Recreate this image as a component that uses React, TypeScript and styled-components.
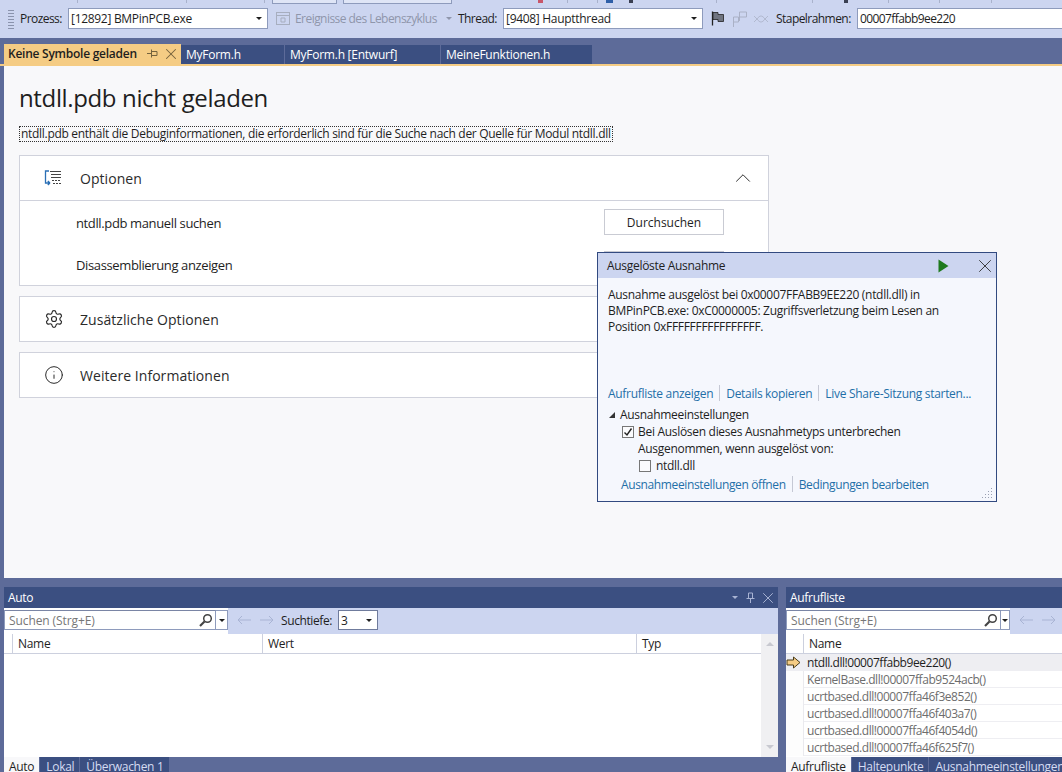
import React from 'react';
import styled, { createGlobalStyle } from 'styled-components';
import { ChevronUp, Settings, Info, X } from 'lucide-react';

const GlobalStyle = createGlobalStyle`
  html, body {
    margin: 0;
    padding: 0;
    background: #5d6b99;
  }
  * {
    box-sizing: border-box;
  }
`;

const Page = styled.div`
  position: relative;
  width: 1062px;
  height: 772px;
  overflow: hidden;
  display: flex;
  flex-direction: column;
  background: #5d6b99;
  color: #1e1e1e;
  font-family: 'Open Sans', 'Noto Sans', 'Liberation Sans', sans-serif;
  font-size: 12px;
  letter-spacing: -0.3px;
`;

const TopStrip = styled.div`
  height: 4px;
  flex: none;
  display: flex;
  background: #ccd5f0;
`;

const StripMark = styled.span<{ $ml: number; $w: number; $kind: string }>`
  flex: none;
  width: ${(p) => p.$w}px;
  margin-left: ${(p) => p.$ml}px;
  height: ${(p) => (p.$kind === 'box' ? 4 : 3)}px;
  background: ${(p) =>
    p.$kind === 'box'
      ? '#dfe5f6'
      : p.$kind === 'red'
        ? '#c8566a'
        : p.$kind === 'blue'
          ? '#2f5fa8'
          : p.$kind === 'dark'
            ? '#3a3f52'
            : '#a9b2cc'};
  ${(p) => p.$kind === 'box' && 'border: 1px solid #8e9bbc; border-top: none;'}
`;

const Toolbar = styled.div`
  height: 34px;
  flex: none;
  display: flex;
  align-items: center;
  background: #ccd5f0;
  padding: 0 0 5px 8px;
  white-space: nowrap;
`;

const Grip = styled.div`
  width: 6px;
  height: 20px;
  flex: none;
  margin-right: 6px;
  background-image: radial-gradient(#8a93ad 0.7px, transparent 0.8px);
  background-size: 2px 3px;
`;

const Label = styled.span<{ $muted?: boolean; $w: number; $ml?: number }>`
  flex: none;
  width: ${(p) => p.$w}px;
  margin-left: ${(p) => p.$ml ?? 0}px;
  letter-spacing: -0.55px;
  color: ${(p) => (p.$muted ? '#8f96ab' : '#1e1e1e')};
`;

const Combo = styled.div<{ $w: number; $ml?: number }>`
  width: ${(p) => p.$w}px;
  height: 21px;
  flex: none;
  margin-left: ${(p) => p.$ml ?? 0}px;
  display: flex;
  align-items: center;
  justify-content: space-between;
  background: #fff;
  border: 1px solid #8e9bbc;
  padding: 0 5px 0 2px;
`;

const FrameCombo = styled(Combo)`
  letter-spacing: -0.6px;
`;

const Caret = styled.span`
  width: 0;
  height: 0;
  flex: none;
  border-left: 3px solid transparent;
  border-right: 3px solid transparent;
  border-top: 3px solid #1e1e1e;
`;

const MutedCaret = styled(Caret)`
  border-top-color: #8f96ab;
  margin-right: 6px;
`;

const LightCaret = styled(Caret)`
  border-top-color: #a8b3d3;
  margin-right: 4px;
`;

const ToolIcon = styled.svg<{ $ml?: number }>`
  flex: none;
  margin-left: ${(p) => p.$ml ?? 0}px;
`;

const TabStrip = styled.div`
  height: 28px;
  flex: none;
  display: flex;
  align-items: flex-end;
  padding-left: 4px;
  border-bottom: 2px solid #f5cc84;
`;

const DocTab = styled.div<{ $w: number; $active?: boolean }>`
  width: ${(p) => p.$w}px;
  height: ${(p) => (p.$active ? 20 : 19)}px;
  flex: none;
  display: flex;
  align-items: center;
  justify-content: space-between;
  padding: 0 1px 1px ${(p) => (p.$active ? 4 : 5)}px;
  margin-right: ${(p) => (p.$active ? 0 : 1)}px;
  font-weight: ${(p) => (p.$active ? 600 : 400)};
  letter-spacing: -0.25px;
  color: ${(p) => (p.$active ? '#1e1e1e' : '#fff')};
  background: ${(p) => (p.$active ? '#f5cc84' : '#3b4f81')};
`;

const TabControls = styled.span`
  display: flex;
  align-items: center;
  gap: 5px;
  color: #75633d;
`;

const PinGlyph = styled.svg<{ $turn?: boolean }>`
  flex: none;
  transform: rotate(${(p) => (p.$turn ? 90 : 0)}deg);
`;

const Document = styled.main`
  height: 512px;
  flex: none;
  margin-left: 4px;
  padding: 17px 15px 0;
  background: #f8f8fa;
`;

const Title = styled.h1`
  margin: 0 0 14px;
  font-size: 24px;
  line-height: 29px;
  font-weight: 400;
  letter-spacing: -0.36px;
  color: #1e1e1e;
`;

const Description = styled.div`
  width: fit-content;
  height: 16px;
  line-height: 14px;
  padding: 0 1px;
  margin-bottom: 13px;
  border: 1px dotted #333;
  white-space: nowrap;
`;

const Card = styled.section`
  width: 750px;
  background: #fff;
  border: 1px solid #d0d2dc;
  margin-bottom: 10px;
`;

const CardHeader = styled.div<{ $open?: boolean }>`
  height: ${(p) => (p.$open ? 45 : 44)}px;
  display: flex;
  align-items: center;
  padding-left: 24px;
  font-size: 14px;
  letter-spacing: 0.05px;
  color: #2b2b2b;
  border-bottom: ${(p) => (p.$open ? '1px solid #d0d2dc' : 'none')};
`;

const HeaderIcon = styled.span`
  width: 36px;
  flex: none;
  display: flex;
  align-items: center;
`;

const Collapse = styled.span`
  margin-left: auto;
  margin-right: 12px;
  display: flex;
`;

const OptionRow = styled.div`
  height: 42px;
  display: flex;
  align-items: center;
  justify-content: space-between;
  padding: 0 44px 0 56px;
  font-size: 13px;
  letter-spacing: -0.37px;
`;

const OptionLabel = styled.span`
  margin-top: 2px;
`;

const WideButton = styled.button`
  width: 120px;
  height: 26px;
  padding: 0;
  font-family: inherit;
  font-size: 12px;
  letter-spacing: 0;
  color: inherit;
  background: #fff;
  border: 1px solid #c9cbd3;
`;

const Popup = styled.aside`
  position: absolute;
  left: 597px;
  top: 252px;
  width: 400px;
  height: 250px;
  display: flex;
  flex-direction: column;
  background: #f5f7fd;
  border: 1px solid #324a80;
`;

const PopupTitle = styled.div`
  height: 25px;
  flex: none;
  display: flex;
  align-items: center;
  justify-content: space-between;
  padding: 0 0 0 9px;
  background: #ccd5f0;
`;

const PopupControls = styled.span`
  display: flex;
  align-items: center;
  gap: 25px;
`;

const PopupMessage = styled.p`
  margin: 0;
  height: 106px;
  flex: none;
  padding: 9px 10px 0;
  line-height: 16px;
`;

const LinkRow = styled.div<{ $indent: number }>`
  display: flex;
  align-items: center;
  height: 18px;
  flex: none;
  padding-left: ${(p) => p.$indent}px;
  white-space: nowrap;
`;

const SettingsLinkRow = styled(LinkRow)`
  margin-top: 1px;
  letter-spacing: -0.37px;
`;

const LinkText = styled.span`
  color: #1f6fa8;
`;

const LinkDivider = styled.span`
  width: 1px;
  height: 16px;
  margin: 0 6px;
  background: #c5c8d4;
`;

const ExceptionSettings = styled.div`
  margin-top: 4px;
  display: flex;
  flex-direction: column;
  flex: 1;
  position: relative;
`;

const SettingsLine = styled.div<{ $indent: number; $gap?: number }>`
  height: 17px;
  display: flex;
  align-items: center;
  gap: ${(p) => p.$gap ?? 5}px;
  padding-left: ${(p) => p.$indent}px;
  white-space: nowrap;
`;

const Disclosure = styled.span`
  width: 0;
  height: 0;
  border-left: 6px solid transparent;
  border-bottom: 6px solid #333;
`;

const CheckBox = styled.span`
  width: 12px;
  height: 12px;
  flex: none;
  display: flex;
  align-items: center;
  justify-content: center;
  background: #fbfbfd;
  border: 1px solid #777;
`;

const Resize = styled.svg`
  position: absolute;
  right: 2px;
  bottom: 2px;
`;

const Splitter = styled.div`
  height: 9px;
  flex: none;
`;

const Docks = styled.div`
  flex: 1;
  display: flex;
  padding-left: 4px;
  min-height: 0;
`;

const Dock = styled.section<{ $w: number; $ml?: number }>`
  width: ${(p) => p.$w}px;
  margin-left: ${(p) => p.$ml ?? 0}px;
  flex: none;
  display: flex;
  flex-direction: column;
  overflow: hidden;
`;

const DockTitle = styled.div`
  height: 21px;
  flex: none;
  display: flex;
  align-items: center;
  justify-content: space-between;
  padding: 0 1px 0 4px;
  background: #3b4f81;
  color: #fff;
`;

const DockControls = styled.span`
  display: flex;
  align-items: center;
  gap: 4px;
  color: #a8b3d3;
`;

const DockTools = styled.div`
  height: 26px;
  flex: none;
  display: flex;
  align-items: flex-start;
  background: #ccd5f0;
  white-space: nowrap;
`;

const SearchArea = styled.div`
  height: 26px;
  flex: none;
  display: flex;
  padding-top: 2px;
  background: #fff;
`;

const SearchBox = styled.div<{ $w: number }>`
  width: ${(p) => p.$w}px;
  height: 20px;
  flex: none;
  display: flex;
  align-items: center;
  justify-content: space-between;
  background: #fff;
  border: 1px solid #8e9bbc;
  border-top-color: #7a85a5;
  padding: 0 2px 0 4px;
  letter-spacing: -0.1px;
  color: #777;
`;

const SearchMenu = styled.span<{ $w: number }>`
  width: ${(p) => p.$w}px;
  height: 20px;
  flex: none;
  display: flex;
  align-items: center;
  justify-content: center;
  background: #fff;
  border: 1px solid #8e9bbc;
  border-left: none;
`;

const NavArrows = styled.span`
  display: flex;
  align-items: center;
  gap: 9px;
  height: 24px;
  margin: 0 7px 0 9px;
  color: #a9b4d4;
`;

const DepthLabel = styled.span`
  line-height: 25px;
  letter-spacing: -0.4px;
`;

const DepthCombo = styled(Combo)`
  height: 20px;
  margin-top: 2px;
  border-color: #6f7b9c;
`;

const Grid = styled.div`
  flex: 1;
  display: flex;
  min-height: 0;
  background: #fff;
`;

const GridMain = styled.div`
  flex: 1;
  min-width: 0;
`;

const Scrollbar = styled.div`
  width: 17px;
  flex: none;
  display: flex;
  flex-direction: column;
  justify-content: space-between;
  align-items: center;
  padding: 8px 0;
  background: #f0f0f2;
`;

const ScrollArrow = styled.span<{ $up?: boolean }>`
  width: 0;
  height: 0;
  border-left: 4px solid transparent;
  border-right: 4px solid transparent;
  ${(p) => (p.$up ? 'border-bottom' : 'border-top')}: 4px solid #c8c9d0;
`;

const HeaderRow = styled.div`
  height: 20px;
  display: flex;
  background: #fff;
  border-bottom: 1px solid #ccd0de;
`;

const HeaderCell = styled.div<{ $w?: number }>`
  width: ${(p) => (p.$w ? `${p.$w}px` : 'auto')};
  flex: ${(p) => (p.$w ? 'none' : '1')};
  line-height: 20px;
  padding-left: 5px;
  border-left: 1px solid #ccd0de;
  &:first-child {
    border-left: none;
    padding-left: 0;
  }
`;

const StackRow = styled.div<{ $current?: boolean }>`
  height: 17px;
  display: flex;
  align-items: center;
  white-space: nowrap;
  letter-spacing: -0.45px;
  color: ${(p) => (p.$current ? '#1e1e1e' : '#6d6d6d')};
  background: ${(p) => (p.$current ? '#eeeef2' : '#fff')};
  box-shadow: inset 0 -1px 0 #eeeef2;
`;

const StackGutter = styled.span`
  width: 18px;
  height: 100%;
  flex: none;
  display: flex;
  align-items: center;
  background: #fdfdfd;
  border-right: 1px solid #eaeaee;
  margin-right: 3px;
`;

const CurrentGutter = styled(StackGutter)`
  background: #eeeef2;
  border-right-color: #eeeef2;
`;

const BottomTabs = styled.div`
  height: 15px;
  flex: none;
  display: flex;
  overflow: hidden;
`;

const BottomTab = styled.div<{ $active?: boolean }>`
  height: 20px;
  flex: none;
  padding: 0 5px 0 ${(p) => (p.$active ? 5 : 6)}px;
  margin-right: 1px;
  line-height: 19px;
  color: ${(p) => (p.$active ? '#1e1e1e' : '#d5dcf2')};
  background: ${(p) => (p.$active ? '#f8f8fa' : '#3b4f81')};
`;

const OptionsIcon = () => (
  <svg width="18" height="17" viewBox="0 0 18 17" fill="none">
    <path d="M5 1H1.5v12H6M6 13l-2.2-2M6 13l-2.2 2" stroke="#2a6fb5" strokeWidth="1.3" />
    <path d="M6 1.5h11M7 4.5h10M7 7.5h10" stroke="#444" strokeWidth="1" />
    <path d="M8 10.5h9M9 13.5h8" stroke="#444" strokeWidth="1" strokeDasharray="2 1" />
  </svg>
);

const PinIcon = ({ turn }: { turn?: boolean }) => (
  <PinGlyph $turn={turn} width="9" height="11" viewBox="0 0 9 11" fill="none">
    <path d="M2.5 1h4v5.5h-4zM0.5 6.5h8M4.5 6.5V11" stroke="currentColor" strokeWidth="1" />
  </PinGlyph>
);

const NavArrow = ({ right }: { right?: boolean }) => (
  <svg width="14" height="10" viewBox="0 0 14 10" fill="none">
    <path
      d={right ? 'M0 5h13M9 1l4 4-4 4' : 'M14 5H1M5 1L1 5l4 4'}
      stroke="currentColor"
      strokeWidth="1"
    />
  </svg>
);

const SearchGlass = () => (
  <svg width="15" height="15" viewBox="0 0 15 15" fill="none">
    <circle cx="9.5" cy="5.5" r="3.8" stroke="#444" strokeWidth="1.5" />
    <path d="M6.5 8.5L2 13" stroke="#444" strokeWidth="2.2" />
  </svg>
);

// x, width, kind of what is still visible of the toolbar row above
const stripMarks: [number, number, string][] = [
  [77, 1, 'sep'],
  [186, 1, 'sep'],
  [264, 1, 'sep'],
  [272, 65, 'box'],
  [343, 109, 'box'],
  [538, 5, 'red'],
  [567, 1, 'sep'],
  [597, 1, 'sep'],
  [606, 7, 'blue'],
  [629, 4, 'dark'],
  [716, 1, 'sep'],
  [812, 1, 'sep'],
  [844, 4, 'dark'],
  [888, 1, 'sep'],
  [939, 1, 'sep'],
  [991, 1, 'sep'],
];

const stackFrames = [
  'KernelBase.dll!00007ffab9524acb()',
  'ucrtbased.dll!00007ffa46f3e852()',
  'ucrtbased.dll!00007ffa46f403a7()',
  'ucrtbased.dll!00007ffa46f4054d()',
  'ucrtbased.dll!00007ffa46f625f7()',
];

const App: React.FC = () => {
  return (
    <Page>
      <GlobalStyle />
      <TopStrip>
        {stripMarks.map(([x, w, kind], i) => {
          const prev = i > 0 ? stripMarks[i - 1][0] + stripMarks[i - 1][1] : 0;
          return <StripMark key={x} $ml={x - prev} $w={w} $kind={kind} />;
        })}
      </TopStrip>
      <Toolbar>
        <Grip />
        <Label $w={48}>Prozess:</Label>
        <Combo $w={200}>
          [12892] BMPinPCB.exe
          <Caret />
        </Combo>
        <ToolIcon $ml={8} width="14" height="13" viewBox="0 0 14 13" fill="none">
          <rect x="0.5" y="0.5" width="13" height="12" stroke="#a7aebf" />
          <path d="M0.5 3.5h13M5 6h4v4H5z" stroke="#a7aebf" />
        </ToolIcon>
        <Label $muted $w={151} $ml={5}>Ereignisse des Lebenszyklus</Label>
        <MutedCaret />
        <Label $w={45}>Thread:</Label>
        <Combo $w={200}>
          [9408] Hauptthread
          <Caret />
        </Combo>
        <ToolIcon $ml={8} width="14" height="15" viewBox="0 0 14 15" fill="none">
          <path d="M1.5 0.5v14" stroke="#222" strokeWidth="1.3" />
          <path d="M2 1.5h5v2h5.5v7H7v-2H2z" fill="#6f7480" stroke="#222" strokeWidth="0.8" />
        </ToolIcon>
        <ToolIcon $ml={7} width="16" height="16" viewBox="0 0 16 16" fill="none">
          <path d="M1.5 6v10M1.5 6h5v5h-5M7.5 1v9M7.5 1h7v5h-7" stroke="#aab1c6" />
        </ToolIcon>
        <ToolIcon $ml={5} width="16" height="12" viewBox="0 0 16 12" fill="none">
          <path d="M1 3l3 3-3 3M15 3l-3 3 3 3M4 6c3-4 5-4 8 0-3 4-5 4-8 0z" stroke="#aab1c6" strokeWidth="0.8" />
        </ToolIcon>
        <Label $w={81} $ml={7}>Stapelrahmen:</Label>
        <FrameCombo $w={210}>00007ffabb9ee220</FrameCombo>
      </Toolbar>

      <TabStrip>
        <DocTab $w={177} $active>
          Keine Symbole geladen
          <TabControls>
            <PinIcon turn />
            <X size={18} strokeWidth={1.4} />
          </TabControls>
        </DocTab>
        <DocTab $w={103}>MyForm.h</DocTab>
        <DocTab $w={155}>MyForm.h [Entwurf]</DocTab>
        <DocTab $w={151}>MeineFunktionen.h</DocTab>
      </TabStrip>

      <Document>
        <Title>ntdll.pdb nicht geladen</Title>
        <Description>
          ntdll.pdb enthält die Debuginformationen, die erforderlich sind für die Suche nach der Quelle für Modul ntdll.dll
        </Description>
        <Card>
          <CardHeader $open>
            <HeaderIcon><OptionsIcon /></HeaderIcon>
            Optionen
            <Collapse><ChevronUp size={26} strokeWidth={0.9} /></Collapse>
          </CardHeader>
          <OptionRow>
            <OptionLabel>ntdll.pdb manuell suchen</OptionLabel>
            <WideButton>Durchsuchen</WideButton>
          </OptionRow>
          <OptionRow>
            <OptionLabel>Disassemblierung anzeigen</OptionLabel>
            <WideButton />
          </OptionRow>
        </Card>
        <Card>
          <CardHeader>
            <HeaderIcon><Settings size={20} strokeWidth={1.4} /></HeaderIcon>
            Zusätzliche Optionen
          </CardHeader>
        </Card>
        <Card>
          <CardHeader>
            <HeaderIcon><Info size={20} strokeWidth={1.2} /></HeaderIcon>
            Weitere Informationen
          </CardHeader>
        </Card>
      </Document>

      <Splitter />

      <Docks>
        <Dock $w={774}>
          <DockTitle>
            Auto
            <DockControls>
              <LightCaret />
              <PinIcon />
              <X size={18} strokeWidth={1.3} />
            </DockControls>
          </DockTitle>
          <DockTools>
            <SearchArea>
              <SearchBox $w={212}>
                Suchen (Strg+E)
                <SearchGlass />
              </SearchBox>
              <SearchMenu $w={12}><Caret /></SearchMenu>
            </SearchArea>
            <NavArrows>
              <NavArrow />
              <NavArrow right />
            </NavArrows>
            <DepthLabel>Suchtiefe:</DepthLabel>
            <DepthCombo $w={40} $ml={6}>
              3
              <Caret />
            </DepthCombo>
          </DockTools>
          <Grid>
            <GridMain>
              <HeaderRow>
                <HeaderCell $w={8} />
                <HeaderCell $w={250}>Name</HeaderCell>
                <HeaderCell $w={374}>Wert</HeaderCell>
                <HeaderCell>Typ</HeaderCell>
              </HeaderRow>
            </GridMain>
            <Scrollbar>
              <ScrollArrow $up />
              <ScrollArrow />
            </Scrollbar>
          </Grid>
          <BottomTabs>
            <BottomTab $active>Auto</BottomTab>
            <BottomTab>Lokal</BottomTab>
            <BottomTab>Überwachen 1</BottomTab>
          </BottomTabs>
        </Dock>

        <Dock $w={276} $ml={8}>
          <DockTitle>Aufrufliste</DockTitle>
          <DockTools>
            <SearchArea>
              <SearchBox $w={215}>
                Suchen (Strg+E)
                <SearchGlass />
              </SearchBox>
              <SearchMenu $w={9}><Caret /></SearchMenu>
            </SearchArea>
            <NavArrows>
              <NavArrow />
              <NavArrow right />
            </NavArrows>
          </DockTools>
          <Grid>
            <GridMain>
              <HeaderRow>
                <HeaderCell $w={17} />
                <HeaderCell>Name</HeaderCell>
              </HeaderRow>
              <StackRow $current>
                <CurrentGutter>
                  <svg width="15" height="13" viewBox="0 0 15 13">
                    <path d="M1 4h6.5V1L14 6.5 7.5 12V9H1z" fill="#f5cc84" stroke="#4a3d1a" strokeWidth="1" />
                  </svg>
                </CurrentGutter>
                ntdll.dll!00007ffabb9ee220()
              </StackRow>
              {stackFrames.map((frame) => (
                <StackRow key={frame}>
                  <StackGutter />
                  {frame}
                </StackRow>
              ))}
            </GridMain>
          </Grid>
          <BottomTabs>
            <BottomTab $active>Aufrufliste</BottomTab>
            <BottomTab>Haltepunkte</BottomTab>
            <BottomTab>Ausnahmeeinstellungen</BottomTab>
          </BottomTabs>
        </Dock>
      </Docks>

      <Popup>
        <PopupTitle>
          Ausgelöste Ausnahme
          <PopupControls>
            <svg width="11" height="14" viewBox="0 0 11 14">
              <path d="M0.5 0.5l10 6.5-10 6.5z" fill="#1e7a1e" />
            </svg>
            <X size={22} strokeWidth={0.9} />
          </PopupControls>
        </PopupTitle>
        <PopupMessage>
          Ausnahme ausgelöst bei 0x00007FFABB9EE220 (ntdll.dll) in
          <br />
          BMPinPCB.exe: 0xC0000005: Zugriffsverletzung beim Lesen an
          <br />
          Position 0xFFFFFFFFFFFFFFFF.
        </PopupMessage>
        <LinkRow $indent={10}>
          <LinkText>Aufrufliste anzeigen</LinkText>
          <LinkDivider />
          <LinkText>Details kopieren</LinkText>
          <LinkDivider />
          <LinkText>Live Share-Sitzung starten...</LinkText>
        </LinkRow>
        <ExceptionSettings>
          <SettingsLine $indent={11}>
            <Disclosure />
            Ausnahmeeinstellungen
          </SettingsLine>
          <SettingsLine $indent={24} $gap={4}>
            <CheckBox>
              <svg width="10" height="10" viewBox="0 0 10 10" fill="none">
                <path d="M1.5 5.5l2.5 2.5 4.5-6.5" stroke="#222" strokeWidth="1.4" />
              </svg>
            </CheckBox>
            Bei Auslösen dieses Ausnahmetyps unterbrechen
          </SettingsLine>
          <SettingsLine $indent={40}>Ausgenommen, wenn ausgelöst von:</SettingsLine>
          <SettingsLine $indent={41}>
            <CheckBox />
            ntdll.dll
          </SettingsLine>
          <SettingsLinkRow $indent={23}>
            <LinkText>Ausnahmeeinstellungen öffnen</LinkText>
            <LinkDivider />
            <LinkText>Bedingungen bearbeiten</LinkText>
          </SettingsLinkRow>
          <Resize width="12" height="12" viewBox="0 0 12 12" fill="#9aa0b2">
            <path d="M9 1h1v1H9zM6 4h1v1H6zM9 4h1v1H9zM3 7h1v1H3zM6 7h1v1H6zM9 7h1v1H9zM0 10h1v1H0zM3 10h1v1H3zM6 10h1v1H6zM9 10h1v1H9z" />
          </Resize>
        </ExceptionSettings>
      </Popup>
    </Page>
  );
};

export default App;
